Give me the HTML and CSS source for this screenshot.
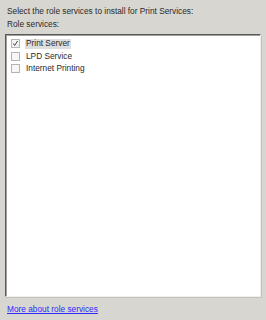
FILE: index.html
```html
<!DOCTYPE html>
<html>
<head>
<meta charset="utf-8">
<link rel="stylesheet" href="styles.css">
</head>
<body>
<div class="page">
  <div class="intro">Select the role services to install for Print Services:</div>
  <div class="label">Role services:</div>
  <div class="listbox">
    <div class="item">
      <span class="cb"><svg width="9" height="9" viewBox="0 0 9 9"><path d="M1.8 4.6 L3.4 7 L7.2 1.2" fill="none" stroke="#222" stroke-width="1.1"/></svg></span>
      <span class="text selected">Print Server</span>
    </div>
    <div class="item">
      <span class="cb"></span>
      <span class="text">LPD Service</span>
    </div>
    <div class="item">
      <span class="cb"></span>
      <span class="text">Internet Printing</span>
    </div>
  </div>
  <a class="more" href="#">More about role services</a>
</div>
</body>
</html>
```
FILE: styles.css
```css
html, body {
  margin: 0;
  padding: 0;
}
body {
  background: #d8d6d1;
  font-family: "Liberation Sans", Arial, sans-serif;
  font-size: 8.3px;
  color: #2a2a2a;
  width: 266px;
  height: 320px;
  overflow: hidden;
}
.page {
  display: flex;
  flex-direction: column;
  padding: 6px 5px 0 5px;
  height: 320px;
  box-sizing: border-box;
}
.intro {
  padding-left: 2px;
  line-height: 10px;
}
.label {
  padding-left: 2px;
  margin-top: 3px;
  line-height: 10px;
}
.listbox {
  margin-top: 5px;
  height: 263px;
  box-sizing: border-box;
  background: #fff;
  border-top: 1px solid #5a5a5a;
  border-left: 1px solid #5a5a5a;
  border-right: 1px solid #eeeeec;
  border-bottom: 1px solid #eeeeec;
  box-shadow: inset 1px 1px 0 #a09f9c, 1px 1px 0 #c4c2bd;
  padding: 4px 0 0 5px;
  display: flex;
  flex-direction: column;
  gap: 3px;
}
.item {
  display: flex;
  align-items: center;
  height: 9.6px;
}
.cb {
  width: 9px;
  height: 9px;
  box-sizing: border-box;
  border: 1px solid #b4b4b4;
  background: #f6f6f6;
  display: flex;
  align-items: center;
  justify-content: center;
  margin-right: 5px;
}
.cb svg {
  display: block;
}
.text {
  line-height: 9.6px;
  padding: 0 1px;
}
.selected {
  background: #dedede;
}
.more {
  margin-top: 7px;
  padding-left: 2px;
  color: #2b2bff;
  text-decoration: underline;
  line-height: 10px;
}
```
